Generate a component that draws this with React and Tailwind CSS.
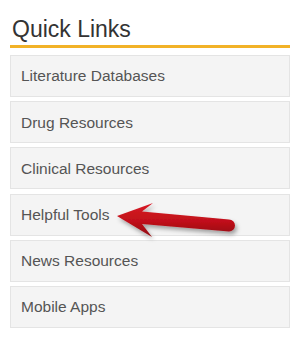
import React from "react";

const links = [
  "Literature Databases",
  "Drug Resources",
  "Clinical Resources",
  "Helpful Tools",
  "News Resources",
  "Mobile Apps",
];

function Arrow() {
  return (
    <svg
      className="absolute left-0 top-0 pointer-events-none"
      width="300"
      height="340"
      viewBox="0 0 300 340"
    >
      <defs>
        <linearGradient id="arrowRed" x1="0" y1="0" x2="0" y2="1">
          <stop offset="0" stopColor="#d81a24" />
          <stop offset="0.55" stopColor="#c0101a" />
          <stop offset="1" stopColor="#8e0a10" />
        </linearGradient>
        <filter id="arrowShadow" x="-20%" y="-40%" width="140%" height="180%">
          <feDropShadow dx="2" dy="3" stdDeviation="2" floodColor="#000" floodOpacity="0.35" />
        </filter>
      </defs>
      <path
        d="M117 216 L153 203 L142 211.5 L229 219.5 A6 6 0 0 1 229 231.5 L142 224 L152 237 Z"
        fill="url(#arrowRed)"
        filter="url(#arrowShadow)"
      />
    </svg>
  );
}

export default function App() {
  return (
    <div className="relative w-[300px] h-[340px] bg-white font-['Liberation_Sans',Arial,sans-serif]">
      <div className="px-[10px]">
        {/* heading */}
        <div className="h-[48px] border-b-[3px] border-[#f2b227] flex items-end pb-[4px]">
          <h2 className="pl-[2px] text-[23px] leading-none text-[#333]">Quick Links</h2>
        </div>

        <ul className="mt-[7px] flex flex-col gap-[4.2px]">
          {links.map((l) => (
            <li
              key={l}
              className="h-[42px] flex items-center pl-[10px] bg-[#f4f4f4] border border-[#e4e4e4] text-[15.5px] text-[#555]"
            >
              {l}
            </li>
          ))}
        </ul>
      </div>
      <Arrow />
    </div>
  );
}
